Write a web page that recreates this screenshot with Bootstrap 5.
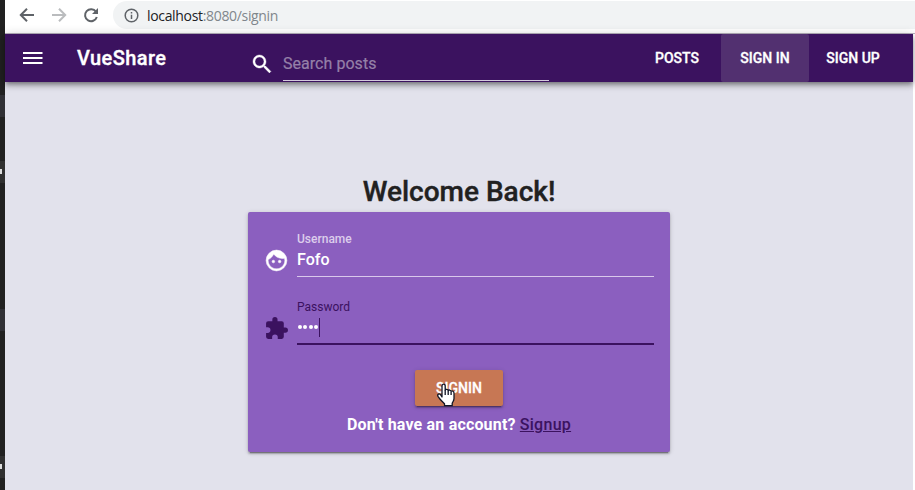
<!DOCTYPE html>
<html lang="en">
<head>
<meta charset="utf-8">
<title>VueShare</title>
<link href="https://cdn.jsdelivr.net/npm/bootstrap@5.3.0/dist/css/bootstrap.min.css" rel="stylesheet">
<style>
body{width:915px;height:490px;overflow:hidden;font-family:Roboto,sans-serif;color:#212121;line-height:1.5;background:#fff}
svg{display:block;flex:none}
.edge{width:5px;background:#212121}
.edge i{display:block;height:22px;background:#303035;flex:none}
.edge i.tick{background:linear-gradient(#ddd,#ddd) 0 8px/2px 5px no-repeat #303030}
.browser{height:33px;background:#fff}
.address{height:28px;margin-top:1px;margin-left:18px;padding-left:11px;background:#f1f3f4;border-radius:14px 0 0 14px;color:#80868b;font:14px "Open Sans",sans-serif;letter-spacing:-.33px}
.address b{font-weight:400;color:#202124}
.page{width:908px;background:#e2e2ec}
.rule{height:1px;width:910px;background:#b9b3c0}
.topbar{height:48px;background:#3b125f;color:#fff;box-shadow:0 2px 4px -1px rgba(0,0,0,.3),0 4px 5px rgba(0,0,0,.2),0 1px 10px rgba(0,0,0,.2);padding-left:16px}
.brand{font-size:20px;font-weight:500;width:175px;margin-left:31px;letter-spacing:.4px;-webkit-text-stroke:.35px}
.search-line{width:266px;height:33px;border-bottom:1px solid #d5cadd;color:#9580a8;font-size:16px;line-height:32px;margin-bottom:1px;letter-spacing:.04px;-webkit-text-stroke:.2px}
.links{margin-left:84px}
.links a{height:48px;line-height:48px;font-size:14px;font-weight:500;color:#fff;width:88px;text-align:center;text-decoration:none;-webkit-text-stroke:.3px}
.links a.active{background:#523070;border-radius:2px}
h1{font-size:28px;font-weight:500;line-height:40px;margin:90px 0 0;-webkit-text-stroke:.4px}
.login{width:422px;height:240px;background:#8b5fbf;border-radius:2px;padding:20px 16px 0;box-shadow:0 3px 1px -2px rgba(0,0,0,.3),0 2px 2px rgba(0,0,0,.2),0 1px 5px rgba(0,0,0,.16);color:#fff}
.entry{height:68px}
.entry svg{margin:15.5px 0 0 -.5px}
.control{width:357px;font-size:16px}
.caption{font-size:12px;line-height:14px;height:14px}
.caption.soft{color:#dccdec;font-weight:500}
.value{height:31px;line-height:27px;border-bottom:1px solid #d9c8eb;font-weight:500}
.focused .value{border-bottom:2px solid #3b125f}
.focused{color:#3b125f}
.dot{width:4px;height:4px;border-radius:50%;background:#fff;margin:11px .75px 0}
.caret{width:1px;height:19px;background:#3b125f;margin-top:4px}
.signin{width:88px;height:36px;margin-top:2px;background:#c77754;border-radius:2px;color:#fff;font-size:14px;font-weight:500;line-height:36px;padding:0;border:0;-webkit-text-stroke:.3px;box-shadow:0 3px 1px -2px rgba(0,0,0,.25),0 2px 2px rgba(0,0,0,.2),0 1px 5px rgba(0,0,0,.15)}
.pointer{left:22px;top:15px}
.foot{font-size:16px;line-height:24px;margin-top:7px;font-weight:700;letter-spacing:.18px}
.foot a{font-weight:500;color:#3b125f;text-decoration:underline;letter-spacing:.27px}
</style>
<script src="https://cdn.jsdelivr.net/npm/bootstrap@5.3.0/dist/js/bootstrap.bundle.min.js"></script>
</head>
<body class="d-flex">
<div class="edge d-flex flex-column flex-shrink-0"><i style="margin-top:95px"></i><i class="tick" style="margin-top:44px"></i><i style="margin-top:126px"></i><i class="tick" style="margin-top:125px"></i></div>
<div class="d-flex flex-column flex-grow-1">
  <div class="browser d-flex align-items-start">
    <svg width="81" height="30" viewBox="5 0 81 30" fill="none" stroke="#5f6368" stroke-width="2"><path d="M34 15H21M27 8.8L20.8 15L27 21.2"/><path d="M52 15H65M59 8.8L65.2 15L59 21.2" stroke="#babcbe"/></svg>
    <svg width="9" height="30" viewBox="86 0 9 30" overflow="visible" fill="none" stroke="#5f6368" stroke-width="2"><path d="M96 11.8A6 6 0 1 0 96.8 17"/><path d="M98 8v6h-6z" fill="#5f6368" stroke="none"/></svg>
    <div class="address d-flex align-items-center flex-grow-1">
      <svg class="me-2" width="15" height="15" viewBox="0 0 15 15" fill="none" stroke="#5f6368" stroke-width="1.5"><circle cx="7.5" cy="7.5" r="6.3"/><path d="M7.5 6.7v4.3M7.5 4v1.6"/></svg>
      <span class="url"><b>localhost</b>:8080/signin</span>
    </div>
  </div>
  <div class="rule"></div>
  <main class="page flex-grow-1">
    <nav class="topbar d-flex align-items-center">
      <svg width="25" height="24" viewBox="0 0 25 24" fill="#fff"><path d="M2 6h19.5v2H2zM2 11h19.5v2H2zM2 16h19.5v2H2z"/></svg>
      <div class="brand flex-shrink-0">VueShare</div>
      <svg class="me-2 mt-3" width="23" height="24" viewBox="2 2 23 24" fill="#fff" stroke="#fff" stroke-width=".4"><path d="M9.5 3A6.5 6.5 0 0 1 16 9.5c0 1.61-.59 3.09-1.56 4.23l.27.27h.79l5.4 5.4-1.5 1.5-5.4-5.4v-.79l-.27-.27A6.5 6.5 0 1 1 9.5 3m0 2a4.5 4.5 0 1 0 0 9a4.5 4.5 0 0 0 0-9"/></svg>
      <div class="search-line mt-auto flex-shrink-0">Search posts</div>
      <div class="links d-flex"><a href="#">POSTS</a><a href="#" class="active">SIGN IN</a><a href="#">SIGN UP</a></div>
    </nav>
    <div class="d-flex flex-column align-items-center">
      <h1>Welcome Back!</h1>
      <form class="login">
        <div class="entry d-flex">
          <svg width="25" height="25" viewBox="0 0 24 24" fill="#fff" stroke="#fff" stroke-width=".5"><path d="M9 11.75A1.25 1.25 0 1 0 9 14.25A1.25 1.25 0 1 0 9 11.75M15 11.75A1.25 1.25 0 1 0 15 14.25A1.25 1.25 0 1 0 15 11.75M12 2A10 10 0 1 0 12 22A10 10 0 1 0 12 2M12 20c-4.41 0-8-3.59-8-8 0-.29.02-.58.05-.86 2.36-1.05 4.23-2.98 5.21-5.37C11.07 8.33 14.05 10 17.42 10c.78 0 1.53-.09 2.25-.26.21.71.33 1.47.33 2.26 0 4.41-3.59 8-8 8z"/></svg>
          <div class="control ms-auto"><div class="caption soft">Username</div><div class="value">Fofo</div></div>
        </div>
        <div class="entry focused d-flex">
          <svg width="25" height="25" viewBox="0 0 24 24" fill="#3b125f"><path d="M20.5 11H19V7a2 2 0 0 0-2-2h-4V3.5a2.5 2.5 0 0 0-5 0V5H4a2 2 0 0 0-2 2v3.8h1.5a2.7 2.7 0 0 1 0 5.4H2V20a2 2 0 0 0 2 2h3.8v-1.5a2.7 2.7 0 0 1 5.4 0V22H17a2 2 0 0 0 2-2v-4h1.5a2.5 2.5 0 0 0 0-5"/></svg>
          <div class="control ms-auto"><div class="caption">Password</div><div class="value d-flex"><span class="dot"></span><span class="dot"></span><span class="dot"></span><span class="dot"></span><span class="caret"></span></div></div>
        </div>
        <div class="d-flex justify-content-center">
          <div class="position-relative"><button type="button" class="signin d-block">SIGNIN</button>
            <svg class="pointer position-absolute" width="20" height="25" viewBox="0 0 20 25" fill="#fff" stroke="#111525" stroke-width="1.3" stroke-linejoin="round"><path d="M5 14V3.2C5 .4 8.2.4 8.2 3.2V7c.4-1 2.8-.9 3 .6.5-1 2.7-.8 2.9.8.6-.8 2.9-.5 2.9 1.5v5.5c0 2.4-1.2 3.4-1.8 4.8v2.5H7.5v-2C5.6 18.8 2.6 16 1 13.3c-1-2 1.2-3.1 2.4-1.8z"/><path d="M8.2 7v5M11.2 8v4M14.1 9v3"/></svg>
          </div>
        </div>
        <div class="foot text-center">Don't have an account? <a href="#">Signup</a></div>
      </form>
    </div>
  </main>
</div>
</body>
</html>
